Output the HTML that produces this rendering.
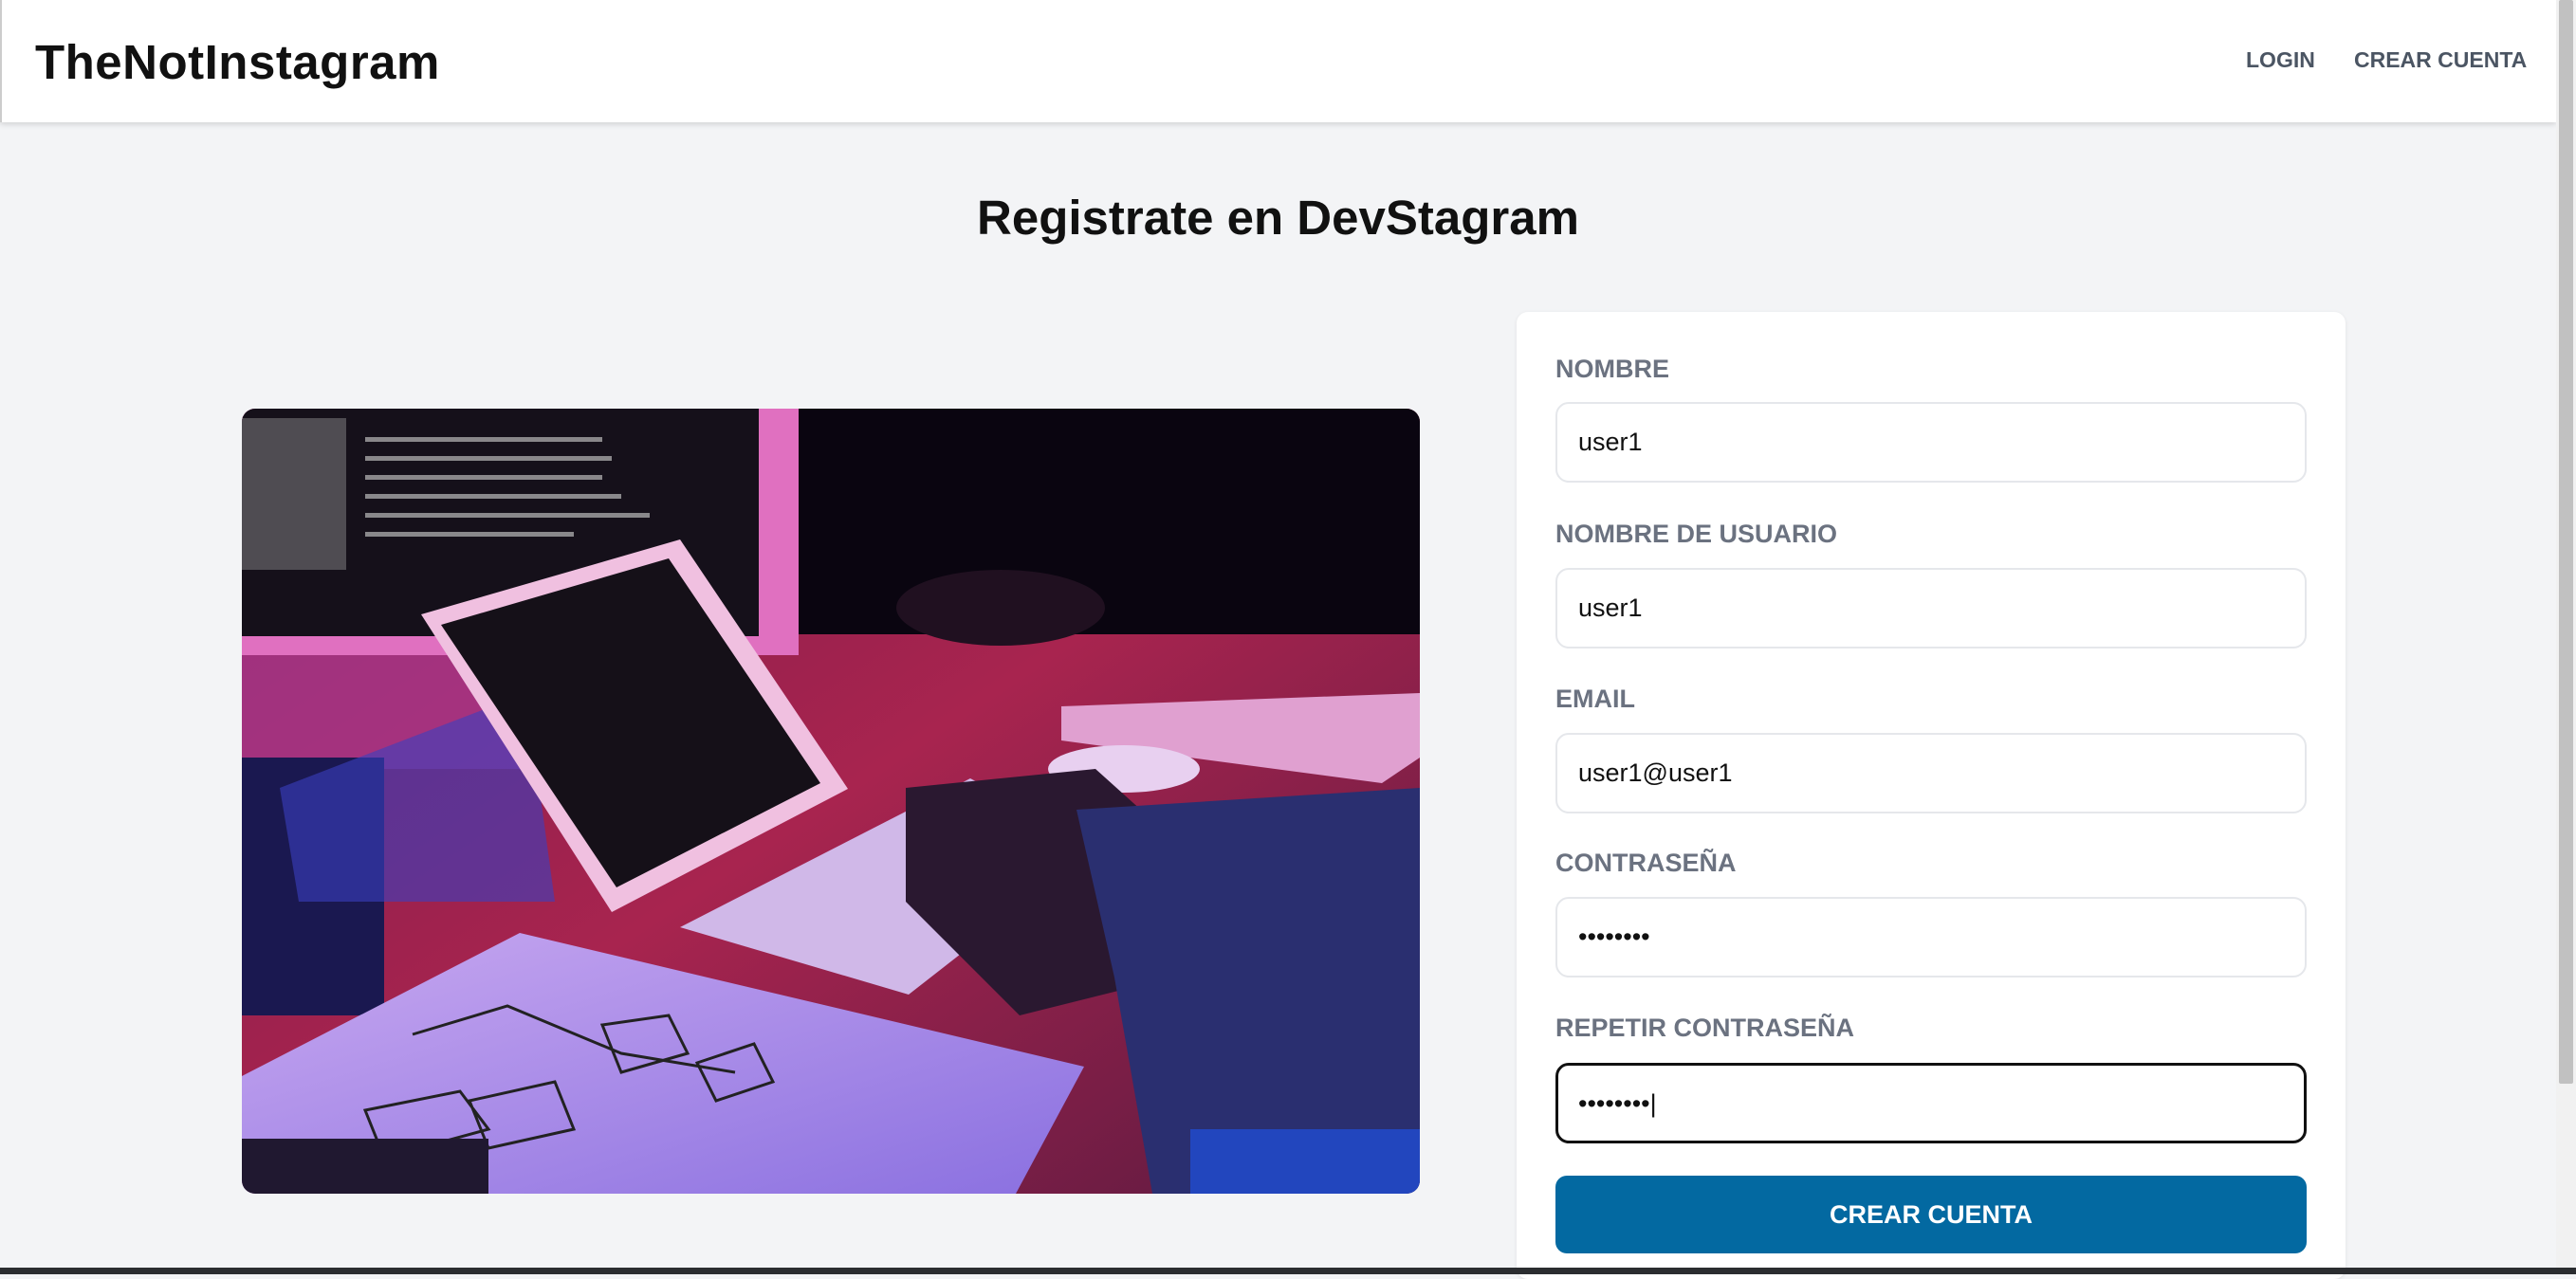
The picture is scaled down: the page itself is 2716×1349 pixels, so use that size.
<!DOCTYPE html>
<html><head><meta charset="utf-8"><style>
*{margin:0;padding:0;box-sizing:border-box}
body{width:2716px;height:1344px;overflow:hidden;background:#f3f4f6;font-family:"Liberation Sans",sans-serif;position:relative}
.hdr{position:absolute;left:0;top:0;width:2695px;height:129px;background:#fff;box-shadow:0 2px 6px rgba(0,0,0,.15);border-left:2px solid #ccc}
.logo{position:absolute;left:35px;top:36px;font-size:51px;font-weight:bold;color:#111;letter-spacing:0.5px}
.nav{position:absolute;top:50px;font-size:23px;font-weight:bold;color:#4b5563}
h1{position:absolute;left:0;width:2695px;top:200px;text-align:center;font-size:51px;font-weight:bold;color:#111}
.img{position:absolute;left:255px;top:431px;width:1242px;height:828px;border-radius:14px;overflow:hidden}
.card{position:absolute;left:1599px;top:329px;width:874px;height:1020px;background:#fff;border-radius:12px;box-shadow:0 1px 4px rgba(0,0,0,.08)}
.lb{position:absolute;left:1640px;font-size:27px;font-weight:bold;color:#6b7280}
.in{position:absolute;left:1640px;width:792px;height:85px;border:2px solid #e5e7eb;border-radius:14px;background:#fff;font-size:27px;color:#111;padding-left:22px;line-height:81px}
.btn{position:absolute;left:1640px;top:1240px;width:792px;height:82px;background:#0369a1;border-radius:12px;color:#fff;font-size:27px;font-weight:bold;text-align:center;line-height:82px}
.sb{position:absolute;left:2695px;top:0;width:21px;height:1337px;background:#f1f1f1}
.th{position:absolute;left:2698px;top:0;width:15px;height:1143px;background:#c1c1c1;border-radius:2px}
.bb{position:absolute;left:0;top:1337px;width:2716px;height:7px;background:#2b2d30}
</style></head><body>
<div class="hdr"><div class="logo">TheNotInstagram</div>
<div class="nav" style="left:2366px">LOGIN</div><div class="nav" style="left:2480px">CREAR CUENTA</div></div>
<h1>Registrate en DevStagram</h1>
<div class="img"><svg width="1242" height="828" viewBox="0 0 1242 828">
<defs><linearGradient id="d" x1="0" y1="0" x2="1" y2="1"><stop offset="0" stop-color="#7a1a4a"/><stop offset=".5" stop-color="#a8244f"/><stop offset="1" stop-color="#5a1a40"/></linearGradient>
<linearGradient id="p" x1="0" y1="0" x2="1" y2="1"><stop offset="0" stop-color="#c8a8f0"/><stop offset="1" stop-color="#8a70e0"/></linearGradient></defs>
<rect width="1242" height="828" fill="url(#d)"/>
<rect x="470" y="0" width="772" height="238" fill="#0a0510"/>
<rect x="0" y="0" width="587" height="260" fill="#e070c0"/>
<rect x="0" y="0" width="545" height="240" fill="#15101a"/>
<g fill="#bbb" opacity=".7"><rect x="0" y="10" width="110" height="160" opacity=".5"/>
<rect x="130" y="30" width="250" height="5"/><rect x="130" y="50" width="260" height="5"/><rect x="130" y="70" width="250" height="5"/><rect x="130" y="90" width="270" height="5"/><rect x="130" y="110" width="300" height="5"/><rect x="130" y="130" width="220" height="5"/></g>
<rect x="0" y="260" width="470" height="120" fill="#b040a0" opacity=".6"/>
<polygon points="0,368 150,368 150,640 0,640" fill="#1a1850"/>
<polygon points="40,400 300,300 330,520 60,520" fill="#3a40c0" opacity=".6"/>
<ellipse cx="800" cy="210" rx="110" ry="40" fill="#201020"/>
<polygon points="864,314 1242,300 1242,368 1202,395 864,350" fill="#e0a0d0"/>
<polygon points="189,217 462,138 639,401 390,531" fill="#f0c0e0"/>
<polygon points="210,228 450,158 610,395 395,505" fill="#151018"/>
<polygon points="462,547 768,390 904,461 703,618" fill="#d0b8e8"/>
<ellipse cx="930" cy="380" rx="80" ry="25" fill="#e8d0f0"/>
<polygon points="700,400 900,380 1000,470 980,600 820,640 700,520" fill="#2a1830"/>
<polygon points="880,423 1242,400 1242,828 960,828 920,600" fill="#2a2f70"/>
<polygon points="0,704 293,553 888,694 816,828 0,828" fill="url(#p)"/>
<g fill="none" stroke="#222" stroke-width="3"><path d="M180 660 L280 630 L400 680 L520 700 M130 740 L230 720 L260 760 L150 790 Z M240 730 L330 710 L350 760 L260 780 Z M380 650 L450 640 L470 680 L400 700 Z M480 690 L540 670 L560 710 L500 730 Z"/></g>
<rect x="0" y="770" width="260" height="58" fill="#201830"/>
<rect x="1000" y="760" width="242" height="68" fill="#2050e0" opacity=".7"/>
</svg></div>
<div class="card"></div>
<div class="lb" style="top:374px">NOMBRE</div><div class="in" style="top:424px">user1</div>
<div class="lb" style="top:548px">NOMBRE DE USUARIO</div><div class="in" style="top:599px">user1</div>
<div class="lb" style="top:722px">EMAIL</div><div class="in" style="top:773px">user1@user1</div>
<div class="lb" style="top:895px">CONTRASEÑA</div><div class="in" style="top:946px">••••••••</div>
<div class="lb" style="top:1069px">REPETIR CONTRASEÑA</div><div class="in" style="top:1121px;border:3px solid #111;padding-left:21px">••••••••|</div>
<div class="btn">CREAR CUENTA</div>
<div class="sb"></div><div class="th"></div><div class="bb"></div>
</body></html>
